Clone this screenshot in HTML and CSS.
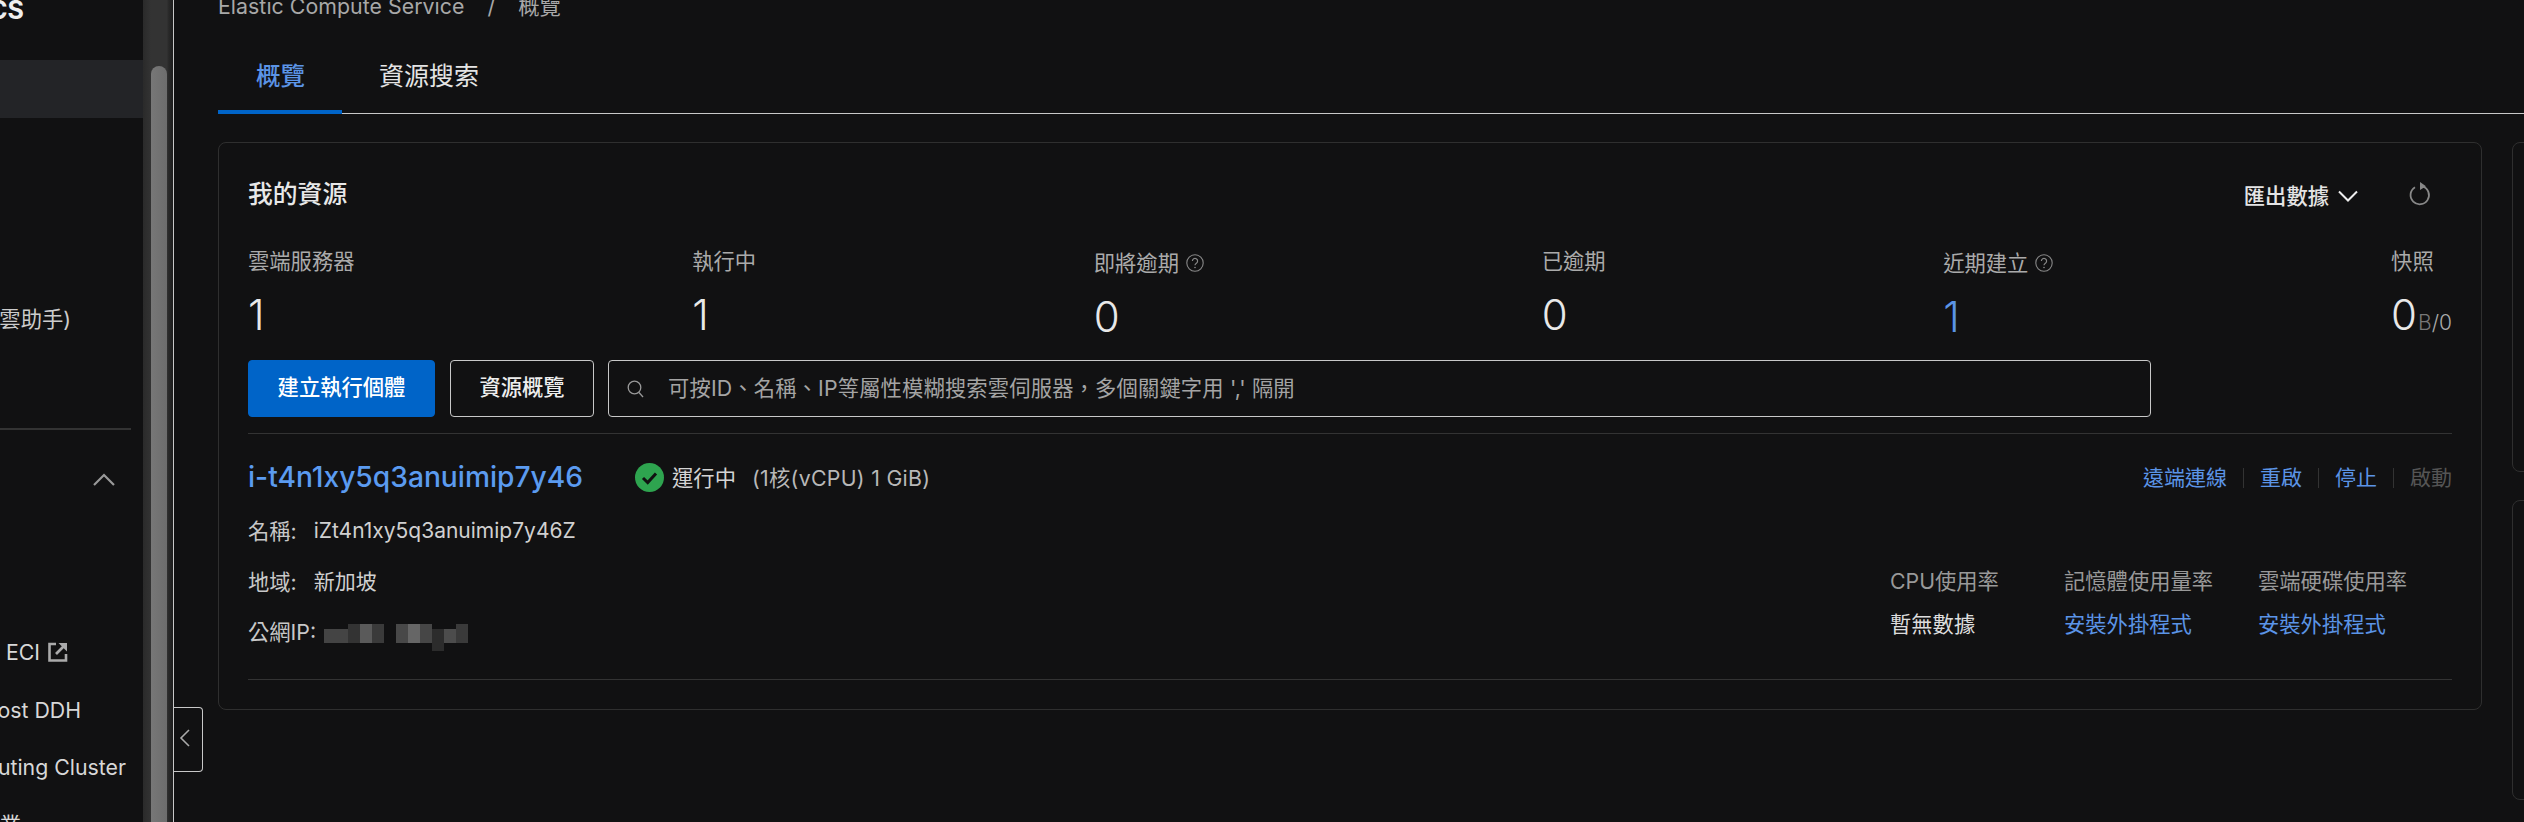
FILE: index.html
```html
<!DOCTYPE html>
<html lang="zh-Hant">
<head>
<meta charset="utf-8">
<title>Elastic Compute Service</title>
<link rel="stylesheet" href="styles.css">
</head>
<body>
<aside class="sidebar">
  <nav class="side-nav">
    <div class="side-title">ECS</div>
    <div class="side-row active"></div>
    <div class="side-row"></div>
    <div class="side-row"></div>
    <div class="side-row"></div>
    <div class="side-row pad-helper">雲助手)</div>
    <div class="side-row"></div>
    <div class="side-divider"></div>
    <div class="side-row pad-chevron">
      <svg class="ico-up" width="22" height="13" viewBox="0 0 22 13"><path d="M1 12 11 2l10 10" fill="none" stroke="#999" stroke-width="2.2"/></svg>
    </div>
    <div class="side-row"></div>
    <div class="side-row"></div>
    <div class="side-row pad-eci">ECI
      <svg class="ico-ext" width="20" height="20" viewBox="0 0 20 20"><path d="M8 2H1.500v16.500H18V12" fill="none" stroke="#aaa" stroke-width="2.600"/><path d="M8 12 16 4" fill="none" stroke="#aaa" stroke-width="2.600"/><path d="M10.500 1H19v8.500z" fill="#aaa"/></svg>
    </div>
    <div class="side-row pad-ddh">ost DDH</div>
    <div class="side-row pad-cluster">uting Cluster</div>
    <div class="side-row pad-last">業</div>
  </nav>
  <div class="scroll-track"><div class="scroll-thumb"></div></div>
</aside>

<main class="main">
  <div class="crumbs">
    <span>Elastic Compute Service</span>
    <span class="crumb-sep">/</span>
    <span>概覽</span>
  </div>

  <div class="tabs">
    <div class="tab tab-active">概覽</div>
    <div class="tab">資源搜索</div>
  </div>

  <div class="columns">
    <section class="card card-main">
      <header class="card-head">
        <h2 class="card-title">我的資源</h2>
        <div class="head-tools">
          <span class="export">匯出數據</span>
          <svg class="ico-down" width="20" height="12" viewBox="0 0 20 12"><path d="M1 1.500 10 10.500 19 1.500" fill="none" stroke="#eee" stroke-width="2"/></svg>
          <svg class="ico-refresh" width="22" height="24" viewBox="0 0 22 24"><path d="M13.500 4.300A9.200 9.200 0 1 1 6 5.200" fill="none" stroke="#888" stroke-width="1.800"/><path d="M11 0l6 4.300-6 3.700z" fill="#888"/></svg>
        </div>
      </header>

      <div class="stats">
        <div class="stat"><div class="stat-label">雲端服務器</div><div class="stat-value">1</div></div>
        <div class="stat"><div class="stat-label">執行中</div><div class="stat-value">1</div></div>
        <div class="stat stat-tip"><div class="stat-label">即將逾期
          <svg class="ico-help" width="18" height="18" viewBox="0 0 18 18"><circle cx="9" cy="9" r="8.200" fill="none" stroke="#888" stroke-width="1.100"/><path d="M6.400 7a2.600 2.600 0 1 1 4 2.200C9.400 9.900 9 10.300 9 11.300" fill="none" stroke="#888" stroke-width="1.200"/><circle cx="9" cy="13.500" r=".8" fill="#888"/></svg>
        </div><div class="stat-value">0</div></div>
        <div class="stat"><div class="stat-label">已逾期</div><div class="stat-value">0</div></div>
        <div class="stat stat-tip"><div class="stat-label">近期建立
          <svg class="ico-help" width="18" height="18" viewBox="0 0 18 18"><circle cx="9" cy="9" r="8.200" fill="none" stroke="#888" stroke-width="1.100"/><path d="M6.400 7a2.600 2.600 0 1 1 4 2.200C9.400 9.900 9 10.300 9 11.300" fill="none" stroke="#888" stroke-width="1.200"/><circle cx="9" cy="13.500" r=".8" fill="#888"/></svg>
        </div><div class="stat-value stat-link">1</div></div>
        <div class="stat"><div class="stat-label">快照</div><div class="stat-value">0<span class="unit-b">B</span><span class="unit-rest">/0</span></div></div>
      </div>

      <div class="toolbar">
        <button class="btn btn-primary">建立執行個體</button>
        <button class="btn btn-outline">資源概覽</button>
        <div class="search">
          <svg width="17" height="18" viewBox="0 0 17 18"><circle cx="7.500" cy="7.500" r="6.300" fill="none" stroke="#999" stroke-width="1.300"/><path d="M12 12.500 16 17" fill="none" stroke="#999" stroke-width="1.300"/></svg>
          <span class="search-text">可按ID、名稱、IP等屬性模糊搜索雲伺服器，多個關鍵字用 ',' 隔開</span>
        </div>
      </div>

      <article class="instance">
        <div class="inst-top">
          <div class="inst-id-wrap">
            <a class="inst-id">i-t4n1xy5q3anuimip7y46</a>
            <svg class="ico-ok" width="29" height="29" viewBox="0 0 29 29"><circle cx="14.500" cy="14.500" r="14.500" fill="#2ea44f"/><path d="M8 15l4.700 4.500L21 10.500" fill="none" stroke="#111" stroke-width="3"/></svg>
            <span class="inst-status">運行中</span>
            <span class="inst-spec">(1核(vCPU) 1 GiB)</span>
          </div>
          <div class="actions">
            <a class="link">遠端連線</a><i class="sep"></i>
            <a class="link">重啟</a><i class="sep"></i>
            <a class="link">停止</a><i class="sep"></i>
            <span class="disabled">啟動</span>
          </div>
        </div>

        <div class="inst-body">
          <div class="details">
            <div class="detail"><span>名稱:</span><span class="detail-val">iZt4n1xy5q3anuimip7y46Z</span></div>
            <div class="detail"><span>地域:</span><span class="detail-val">新加坡</span></div>
            <div class="detail"><span>公網IP:</span>
              <svg class="mosaic" width="144" height="28" viewBox="0 0 144 28">
                <rect x="0" y="5" width="24" height="14" fill="#444"/><rect x="24" y="0" width="12" height="19" fill="#333"/><rect x="36" y="0" width="12" height="19" fill="#5a5a5a"/><rect x="48" y="0" width="12" height="19" fill="#3a3a3a"/>
                <rect x="72" y="0" width="12" height="19" fill="#484848"/><rect x="84" y="0" width="12" height="19" fill="#666"/><rect x="96" y="0" width="12" height="19" fill="#464646"/><rect x="108" y="5" width="12" height="22" fill="#2c2c2c"/><rect x="120" y="5" width="12" height="14" fill="#4c4c4c"/><rect x="132" y="0" width="12" height="19" fill="#3a3a3a"/>
              </svg>
            </div>
          </div>
          <div class="metrics">
            <span class="m-label">CPU使用率</span><span class="m-label">記憶體使用量率</span><span class="m-label">雲端硬碟使用率</span>
            <span class="m-value">暫無數據</span><a class="link">安裝外掛程式</a><a class="link">安裝外掛程式</a>
          </div>
        </div>
      </article>
    </section>

    <div class="side-cards">
      <div class="card card-a"></div>
      <div class="card card-b"></div>
    </div>
  </div>
</main>

<button class="collapse" aria-label="收合">
  <svg width="12" height="18" viewBox="0 0 12 18"><path d="M10 1 2 9l8 8" fill="none" stroke="#aaa" stroke-width="1.600"/></svg>
</button>
</body>
</html>
```
FILE: styles.css
```css
* { box-sizing: border-box; }
html, body { height: 100%; }
body {
  margin: 0;
  width: 2524px;
  height: 822px;
  overflow: hidden;
  display: flex;
  position: relative;
  background: #111112;
  color: #ddd;
  font-family: Inter, "Noto Sans CJK TC", sans-serif;
  font-size: 21.300px;
  line-height: 30px;
}

/* sidebar */
.sidebar {
  flex: none;
  width: 174px;
  height: 822px;
  display: flex;
  border-right: 1px solid #c8c8c8;
  overflow: hidden;
}
.side-nav { flex: none; width: 143px; overflow: hidden; }
.side-title {
  height: 60px;
  display: flex;
  justify-content: flex-end;
  padding-right: 119px;
  font-size: 25px;
  font-weight: 700;
  line-height: 20px;
  color: #eee;
  white-space: nowrap;
}
.side-row {
  height: 57.500px;
  display: flex;
  align-items: center;
  justify-content: flex-end;
  white-space: nowrap;
  color: #d8d8d8;
}
.side-row.active { background: #232427; }
.side-divider { height: 2px; width: 131px; margin: 23px 0 21px; background: #333; }
.pad-helper { padding-right: 72px; color: #ccc; }
.pad-chevron { padding-right: 28px; }
.pad-eci { padding-right: 75px; gap: 8px; }
.pad-ddh { padding-right: 62px; }
.pad-cluster { padding-right: 17px; }
.pad-last { padding-right: 122px; }
.ico-ext { flex: none; }
.scroll-track {
  flex: none;
  width: 30px;
  background: linear-gradient(90deg, #2a2a2a 0, #333 8px, #333 24px, #2b2b2b 25px, #1c1c1c 100%);
  padding: 66px 6px 0 8px;
}
.scroll-thumb {
  height: 780px;
  border-radius: 8px 8px 0 0;
  background: linear-gradient(90deg, #777, #6d6d6d);
}

/* main */
.main { flex: 1; min-width: 0; padding-left: 44px; overflow: hidden; }
.crumbs {
  margin-top: -4px;
  height: 21px;
  line-height: 21px;
  margin-bottom: 18px;
  color: #a8a8a8;
  display: flex;
  letter-spacing: .05px;
}
.crumb-sep { margin: 0 23px; }
.tabs { display: flex; height: 79px; border-bottom: 1px solid #c8c8c8; }
.tab {
  padding: 25px 37px 18px;
  border-bottom: 4px solid transparent;
  font-size: 25px;
  line-height: 32px;
  color: #e4e4e4;
  height: 79px;
}
.tab-active {
  color: #5b94e6;
  border-bottom-color: #0064c8;
  font-weight: 500;
  font-size: 24.500px;
  padding-left: 38px;
  padding-right: 37px;
}

.columns { display: flex; margin-top: 28px; gap: 30px; }
.card { border: 1px solid #2f2f2f; border-radius: 8px; }
.card-main { flex: none; width: 2264px; padding: 0 29px; height: 568px; }
.side-cards { flex: none; width: 200px; display: flex; flex-direction: column; gap: 28px; }
.card-a { height: 330px; }
.card-b { height: 300px; }

.card-head { display: flex; justify-content: space-between; align-items: flex-start; height: 67px; padding-top: 35px; }
.card-title { margin: 0; font-size: 24.800px; line-height: 32px; font-weight: 500; color: #e8e8e8; }
.head-tools { display: flex; align-items: center; margin: 3px 21px 0 0; }
.export { font-weight: 500; color: #e4e4e4; }
.ico-down { margin-left: 9px; }
.ico-refresh { margin-left: 51px; margin-top: -5px; }

.stats { display: flex; justify-content: space-between; margin-top: 36px; height: 96px; }
.stat-label { color: #aaa; display: flex; align-items: center; gap: 7px; height: 30px; white-space: nowrap; }
.stat-tip { padding-top: 2px; }
.stat-value { margin-top: 15px; font-size: 42px; line-height: 48px; font-weight: 300; color: #e8e8e8; white-space: nowrap; }
.stat-link { color: #5b94e6; }
.unit-b { font-size: 21px; color: #777; margin-left: 1px; }
.unit-rest { font-size: 21px; color: #aaa; }
.ico-help { flex: none; }

.toolbar { display: flex; margin-top: 18px; height: 57px; }
.btn {
  height: 57px;
  border-radius: 4px;
  font: inherit;
  font-weight: 500;
  padding: 0 0 3px;
  color: #eee;
  background: transparent;
  border: 1px solid #c8c8c8;
}
.btn-primary { width: 187px; background: #0064c8; border-color: #0064c8; color: #fff; }
.btn-outline { width: 144px; margin-left: 15px; }
.search {
  width: 1543px;
  margin-left: 14px;
  border: 1px solid #c8c8c8;
  border-radius: 4px;
  display: flex;
  align-items: center;
  padding-left: 18px;
  gap: 24px;
  color: #a4a4a4;
}
.search-text {
  white-space: pre;
  padding-bottom: 2px;
  font-family: Inter, "Noto Sans CJK SC", sans-serif;
  letter-spacing: .15px;
}

.instance { margin-top: 16px; border-top: 1px solid #333; border-bottom: 1px solid #333; height: 247px; padding-top: 24px; }
.inst-top { display: flex; justify-content: space-between; align-items: center; height: 36px; }
.inst-id-wrap { display: flex; align-items: center; }
.inst-id { font-size: 28.200px; font-weight: 500; color: #5b9bf0; line-height: 36px; padding-top: 2px; }
.ico-ok { margin-left: 52px; margin-right: 8px; margin-top: 2px; }
.inst-status { color: #d4d4d4; padding-top: 4px; }
.inst-spec { margin-left: 16px; color: #b8b8b8; padding-top: 4px; letter-spacing: .3px; }
.actions { display: flex; align-items: center; padding-top: 4px; font-size: 21px; }
.link { color: #5b94e6; }
.disabled { color: #555; }
.sep { width: 1px; height: 20px; background: #333; margin: 0 16px; }

.inst-body { display: flex; justify-content: space-between; }
.details { display: flex; flex-direction: column; gap: 20.500px; margin-top: 22px; color: #c8c8c8; }
.detail { display: flex; height: 30px; }
.detail-val { margin-left: 17px; color: #d0d0d0; font-size: 21px; }
.mosaic { margin-left: 8px; margin-top: 7px; flex: none; }
.metrics {
  display: grid;
  grid-template-columns: 174px 194px 149px;
  row-gap: 13px;
  margin: 72px 45px 0 0;
  align-content: start;
}
.m-label { color: #999; white-space: nowrap; }
.m-value { color: #ddd; }

.collapse {
  position: absolute;
  left: 174px;
  top: 707px;
  width: 29px;
  height: 65px;
  padding: 0 6px 0 0;
  background: #111112;
  border: 1px solid #c8c8c8;
  border-left: 0;
  border-radius: 0 4px 4px 0;
}
```
